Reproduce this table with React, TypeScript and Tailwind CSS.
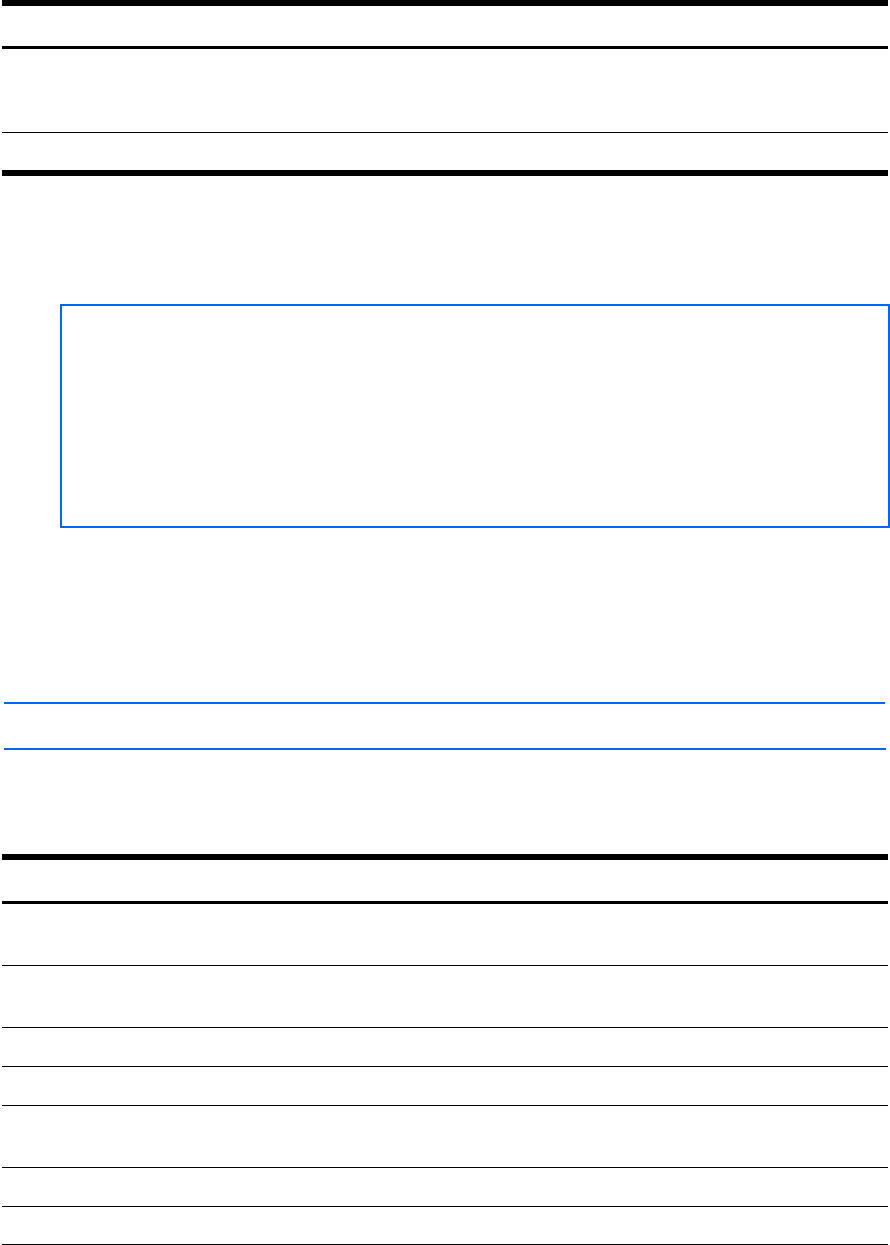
const bottomRows = [61, 61, 38, 38, 61, 38, 37];

function RuledTable({ header, rows }: { header: number; rows: number[] }) {
  return (
    <div className="ml-[2px] w-[886px]">
      <div className="h-[6px] bg-black" />
      <div style={{ height: header }} />
      <div className="h-[3px] bg-black" />
      {rows.map((h, i) => (
        <div key={i} className="border-b border-black" style={{ height: h + 1 }} />
      ))}
    </div>
  );
}

export default function App() {
  return (
    <div className="w-[890px] h-[1245px] bg-white overflow-hidden font-['Liberation_Sans',sans-serif]">
      {/* top table */}
      <div className="ml-[2px] w-[886px]">
        <div className="h-[6px] bg-black" />
        <div className="h-[40px]" />
        <div className="h-[3px] bg-black" />
        <div className="h-[83px]" />
        <div className="h-px bg-black" />
        <div className="h-[37px]" />
        <div className="h-[6px] bg-black" />
      </div>

      {/* blue frame */}
      <div className="mt-[128px] ml-[60px] w-[830px] h-[224px] border-2 border-[#0066ff]" />

      {/* blue rules */}
      <div className="mt-[174px] ml-[4px] w-[881px] h-[2px] bg-[#0066ff]" />
      <div className="mt-[44px] ml-[4px] w-[882px] h-[2px] bg-[#0066ff]" />

      {/* bottom table */}
      <div className="mt-[104px]">
        <RuledTable header={41} rows={bottomRows} />
      </div>
    </div>
  );
}
